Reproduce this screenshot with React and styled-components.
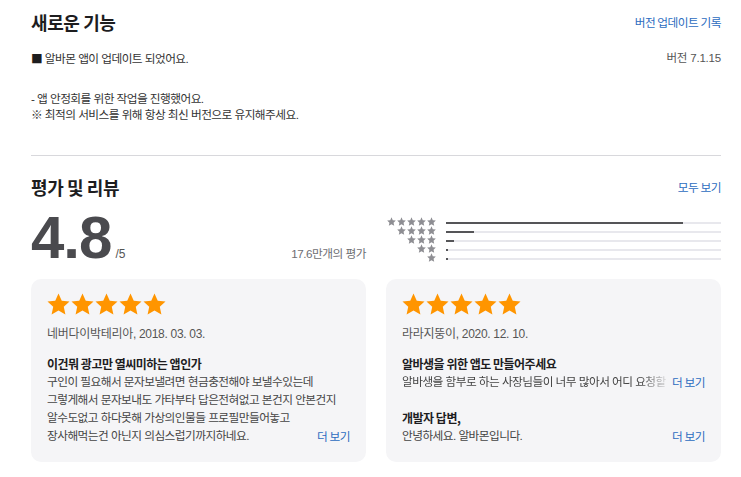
import React from "react";
import styled, { createGlobalStyle } from "styled-components";

const Global = createGlobalStyle`
  html, body { margin: 0; padding: 0; background: #fff; }
  body {
    font-family: "Liberation Sans", "Noto Sans CJK KR", sans-serif;
    color: #1d1d1f;
  }
`;

const Page = styled.div`
  width: 741px;
  box-sizing: border-box;
  padding: 12px 20px 0 31px;
`;

const HeaderRow = styled.div`
  display: flex;
  justify-content: space-between;
  align-items: center;
  height: 20px;
  margin-top: ${(p) => p.$mt || 0}px;
`;

const Title = styled.h2`
  margin: 0;
  font-family: "Noto Sans CJK KR", sans-serif;
  font-size: 18px;
  line-height: 20px;
  font-weight: 700;
  letter-spacing: -0.4px;
  color: #1d1d1f;
`;

const Link = styled.a`
  font-family: "Noto Sans CJK KR", sans-serif;
  font-size: 11.7px;
  letter-spacing: -0.5px;
  line-height: 16px;
  color: #2c6cc0;
  text-decoration: none;
  cursor: pointer;
  flex-shrink: 0;
`;

const BodyText = styled.div`
  font-family: "Liberation Sans", "Noto Sans CJK KR", sans-serif;
  font-size: 11.7px;
  letter-spacing: -0.55px;
  line-height: 16px;
  color: #333;
`;

const Bullet = styled.span`
  font-family: "Noto Sans CJK KR", sans-serif;
  color: #1d1d1f;
`;

const VersionRow = styled.div`
  display: flex;
  justify-content: space-between;
  margin-top: 18px;
`;

const VersionLabel = styled(BodyText)`
  color: #555;
  font-size: 11.5px;
  letter-spacing: -0.2px;
`;

const Notes = styled(BodyText)`
  margin-top: 24px;
`;

const Divider = styled.hr`
  margin: 32px 0 0;
  border: none;
  border-top: 1px solid #d8d8dc;
`;

const TwoCol = styled.div`
  display: grid;
  grid-template-columns: minmax(0, 1fr) minmax(0, 1fr);
  column-gap: 20px;
  margin-top: ${(p) => p.$mt || 0}px;
`;

const ScoreCol = styled.div`
  display: flex;
  align-items: baseline;
`;

const BigScore = styled.span`
  font-family: "Liberation Sans", sans-serif;
  font-weight: 700;
  font-size: 60px;
  line-height: 60px;
  letter-spacing: -1px;
  color: #4a4a4e;
`;

const OutOf = styled.span`
  font-size: 12px;
  color: #555;
  margin-left: 4px;
`;

const Count = styled.span`
  margin-left: auto;
  font-family: "Liberation Sans", "Noto Sans CJK KR", sans-serif;
  font-size: 11.7px;
  letter-spacing: -0.5px;
  color: #6e6e73;
`;

const Histogram = styled.div`
  display: flex;
  flex-direction: column;
  padding-top: 9px;
`;

const HistRow = styled.div`
  display: grid;
  grid-template-columns: 50px 1fr;
  column-gap: 10px;
  align-items: center;
  height: 9px;
`;

const MiniStars = styled.div`
  display: flex;
  justify-content: flex-end;
  gap: 1px;
`;

const Track = styled.div`
  height: 2px;
  background: #e8e8ed;
  margin-top: 2px;
`;

const Fill = styled.div`
  height: 100%;
  background: #555558;
`;

const Card = styled.div`
  background: #f5f5f7;
  border-radius: 10px;
  height: 183px;
  box-sizing: border-box;
  padding: 14px 16px 0 16px;
`;

const StarRow = styled.div`
  display: flex;
  gap: 1px;
  height: 22px;
`;

const Author = styled.div`
  margin-top: 11px;
  font-family: "Liberation Sans", "Noto Sans CJK KR", sans-serif;
  font-size: 12px;
  letter-spacing: -0.3px;
  line-height: 16px;
  color: #555;
`;

const ReviewTitle = styled.div`
  margin-top: ${(p) => (p.$mt != null ? p.$mt : 13)}px;
  font-family: "Noto Sans CJK KR", sans-serif;
  font-weight: 700;
  font-size: 12px;
  letter-spacing: -0.5px;
  line-height: 18px;
  color: #1d1d1f;
`;

const ReviewLine = styled.div`
  display: flex;
  justify-content: space-between;
  align-items: center;
  font-family: "Liberation Sans", "Noto Sans CJK KR", sans-serif;
  font-size: 11.7px;
  letter-spacing: -0.55px;
  line-height: 18px;
  color: #444;
  white-space: nowrap;
`;

const Faded = styled.span`
  white-space: nowrap;
  margin-right: 4px;
  -webkit-mask-image: linear-gradient(to right, #000 calc(100% - 26px), rgba(0,0,0,0.15));
  mask-image: linear-gradient(to right, #000 calc(100% - 26px), rgba(0,0,0,0.15));
`;

const STAR_PATH =
  "M12 0.6l3.4 7.4 8.1 0.9-6 5.5 1.7 8-7.2-4.1-7.2 4.1 1.7-8-6-5.5 8.1-0.9z";

const Star = ({ w, h, color }) => (
  <svg width={w} height={h} viewBox="0 0 24 23" preserveAspectRatio="none">
    <path d={STAR_PATH} fill={color} />
  </svg>
);

const histogram = [
  { n: 5, pct: 86 },
  { n: 4, pct: 10 },
  { n: 3, pct: 3 },
  { n: 2, pct: 0.8 },
  { n: 1, pct: 0.8 },
];

const FiveStars = () => (
  <StarRow>
    {[0, 1, 2, 3, 4].map((i) => (
      <Star key={i} w={23} h={22} color="#ff9500" />
    ))}
  </StarRow>
);

export default function App() {
  return (
    <Page>
      <Global />
      <HeaderRow>
        <Title>새로운 기능</Title>
        <Link>버전 업데이트 기록</Link>
      </HeaderRow>
      <VersionRow>
        <BodyText>
          <Bullet>■</Bullet> 알바몬 앱이 업데이트 되었어요.
        </BodyText>
        <VersionLabel>버전 7.1.15</VersionLabel>
      </VersionRow>
      <Notes>
        <div>- 앱 안정회를 위한 작업을 진행했어요.</div>
        <div>※ 최적의 서비스를 위해 항상 최신 버전으로 유지해주세요.</div>
      </Notes>
      <Divider />

      <HeaderRow $mt={21}>
        <Title>평가 및 리뷰</Title>
        <Link>모두 보기</Link>
      </HeaderRow>

      <TwoCol $mt={11}>
        <ScoreCol>
          <BigScore>4.8</BigScore>
          <OutOf>/5</OutOf>
          <Count>17.6만개의 평가</Count>
        </ScoreCol>
        <Histogram>
          {histogram.map((h) => (
            <HistRow key={h.n}>
              <MiniStars>
                {Array.from({ length: h.n }).map((_, i) => (
                  <Star key={i} w={9} h={9} color="#8e8e93" />
                ))}
              </MiniStars>
              <Track>
                <Fill style={{ width: `${h.pct}%` }} />
              </Track>
            </HistRow>
          ))}
        </Histogram>
      </TwoCol>

      <TwoCol $mt={11}>
        <Card>
          <FiveStars />
          <Author>네버다이박테리아, 2018. 03. 03.</Author>
          <ReviewTitle>이건뭐 광고만 열씨미하는 앱인가</ReviewTitle>
          <ReviewLine>구인이 필요해서 문자보낼려면 현금충전해야 보낼수있는데</ReviewLine>
          <ReviewLine>그렇게해서 문자보내도 가타부타 답은전혀없고 본건지 안본건지</ReviewLine>
          <ReviewLine>알수도없고 하다못해 가상의인물들 프로필만들어놓고</ReviewLine>
          <ReviewLine>
            <span>장사해먹는건 아닌지 의심스럽기까지하네요.</span>
            <Link>더 보기</Link>
          </ReviewLine>
        </Card>
        <Card>
          <FiveStars />
          <Author>라라지뚱이, 2020. 12. 10.</Author>
          <ReviewTitle>알바생을 위한 앱도 만들어주세요</ReviewTitle>
          <ReviewLine>
            <Faded>알바생을 함부로 하는 사장님들이 너무 많아서 어디 요청할</Faded>
            <Link>더 보기</Link>
          </ReviewLine>
          <ReviewTitle $mt={18}>개발자 답변,</ReviewTitle>
          <ReviewLine>
            <span>안녕하세요. 알바몬입니다.</span>
            <Link>더 보기</Link>
          </ReviewLine>
        </Card>
      </TwoCol>
    </Page>
  );
}
